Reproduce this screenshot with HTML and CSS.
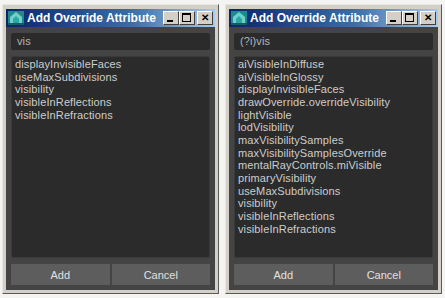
FILE: index.html
```html
<!DOCTYPE html>
<html lang="en">
<head>
  <meta charset="UTF-8">
  <title>Add Override Attribute</title>
  <link rel="stylesheet" href="styles.css">
</head>
<body>
  <div class="desk">
    <!-- plain filter -->
    <div class="window">
      <div class="titlebar">
        <svg class="app-icon" width="16" height="14" viewBox="0 0 16 14">
          <rect width="16" height="14" fill="#1d8a8e"/>
          <path d="M2 12 L2 6 L8 1 L14 6 L14 12 Z" fill="#6fd0c8"/>
          <path d="M5 12 L5 8 L8 5 L11 8 L11 12 Z" fill="#2aa6a4"/>
          <rect y="12" width="16" height="2" fill="#0e5e66"/>
        </svg>
        <span class="title">Add Override Attribute</span>
        <div class="caption-btns">
          <span class="cbtn min"><i></i></span>
          <span class="cbtn max"><i></i></span>
          <span class="cbtn close">&#x2715;</span>
        </div>
      </div>
      <div class="content">
        <div class="search">vis</div>
        <ul class="list">
          <li>displayInvisibleFaces</li>
          <li>useMaxSubdivisions</li>
          <li>visibility</li>
          <li>visibleInReflections</li>
          <li>visibleInRefractions</li>
        </ul>
        <div class="actions">
          <button>Add</button>
          <button>Cancel</button>
        </div>
      </div>
    </div>

    <!-- regex filter -->
    <div class="window">
      <div class="titlebar">
        <svg class="app-icon" width="16" height="14" viewBox="0 0 16 14">
          <rect width="16" height="14" fill="#1d8a8e"/>
          <path d="M2 12 L2 6 L8 1 L14 6 L14 12 Z" fill="#6fd0c8"/>
          <path d="M5 12 L5 8 L8 5 L11 8 L11 12 Z" fill="#2aa6a4"/>
          <rect y="12" width="16" height="2" fill="#0e5e66"/>
        </svg>
        <span class="title">Add Override Attribute</span>
        <div class="caption-btns">
          <span class="cbtn min"><i></i></span>
          <span class="cbtn max"><i></i></span>
          <span class="cbtn close">&#x2715;</span>
        </div>
      </div>
      <div class="content">
        <div class="search">(?i)vis</div>
        <ul class="list">
          <li>aiVisibleInDiffuse</li>
          <li>aiVisibleInGlossy</li>
          <li>displayInvisibleFaces</li>
          <li>drawOverride.overrideVisibility</li>
          <li>lightVisible</li>
          <li>lodVisibility</li>
          <li>maxVisibilitySamples</li>
          <li>maxVisibilitySamplesOverride</li>
          <li>mentalRayControls.miVisible</li>
          <li>primaryVisibility</li>
          <li>useMaxSubdivisions</li>
          <li>visibility</li>
          <li>visibleInReflections</li>
          <li>visibleInRefractions</li>
        </ul>
        <div class="actions">
          <button>Add</button>
          <button>Cancel</button>
        </div>
      </div>
    </div>
  </div>
</body>
</html>
```

FILE: styles.css
```css
body {
  margin: 0;
  background-color: #f4f4f2;
  font-family: "Liberation Sans", Arial, sans-serif;
}
.desk {
  display: flex;
  gap: 6px;
  padding: 4px 3px 4px 2px;
  height: 298px;
  box-sizing: border-box;
}
.window {
  flex: 1;
  display: flex;
  flex-direction: column;
  background-color: #d4d0c8;
  border: 1px solid;
  border-color: #e8e6e0 #5a5a5a #5a5a5a #e8e6e0;
  padding: 3px;
  box-sizing: border-box;
}
.titlebar {
  display: flex;
  align-items: center;
  height: 18px;
  margin-top: 1px;
  padding: 0 2px;
  background: linear-gradient(to right, #0a246a, #3a6ea5 60%, #a6caf0);
}
.app-icon {
  flex: none;
  margin-right: 3px;
}
.title {
  flex: 1;
  color: #fff;
  font-size: 12px;
  font-weight: bold;
  white-space: nowrap;
  overflow: hidden;
}
.caption-btns {
  display: flex;
}
.cbtn {
  position: relative;
  width: 14px;
  height: 12px;
  background-color: #d4d0c8;
  border: 1px solid;
  border-color: #fff #404040 #404040 #fff;
  font-size: 10px;
  font-weight: bold;
  line-height: 12px;
  text-align: center;
  color: #000;
}
.cbtn.close {
  margin-left: 2px;
}
.min i {
  position: absolute;
  left: 3px;
  bottom: 2px;
  width: 6px;
  height: 2px;
  background-color: #000;
}
.max i {
  position: absolute;
  left: 2px;
  top: 1px;
  width: 7px;
  height: 6px;
  border: 1px solid #000;
  border-top-width: 2px;
}
.content {
  flex: 1;
  display: flex;
  flex-direction: column;
  background-color: #444444;
  padding: 6px 5px 5px 5px;
  gap: 6px;
  min-height: 0;
}
.search {
  height: 17px;
  background-color: #2b2b2b;
  border-radius: 2px;
  color: #b4b4b4;
  font-size: 11px;
  line-height: 17px;
  padding: 0 6px;
  letter-spacing: 0.1px;
}
.list {
  flex: 1;
  margin: 0;
  padding: 1px 3px;
  list-style: none;
  background-color: #2b2b2b;
  border: 1px solid #3a3a3a;
  border-radius: 2px;
  color: #cdcdcd;
  font-size: 11px;
  line-height: 12.66px;
  letter-spacing: 0.12px;
  overflow: hidden;
}
.actions {
  display: flex;
  gap: 2px;
  height: 21px;
}
.actions button {
  flex: 1;
  border: none;
  background-color: #5d5d5d;
  color: #e0e0e0;
  font-family: "Liberation Sans", Arial, sans-serif;
  font-size: 11px;
  padding: 0;
}
```
